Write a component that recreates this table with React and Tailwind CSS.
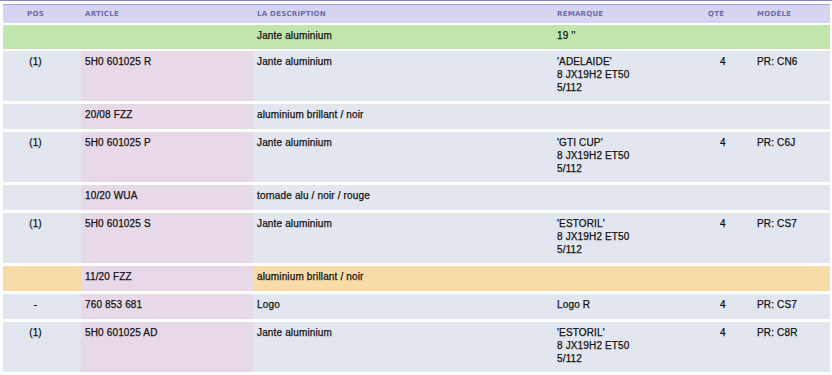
import React from "react";

const rows = [
  { kind: "green", pos: "", art: "", desc: "Jante aluminium", rem: ["19 ''"], qty: "", mod: "", tall: false },
  { kind: "gray", pos: "(1)", art: "5H0 601025 R", desc: "Jante aluminium", rem: ["'ADELAIDE'", "8 JX19H2 ET50", "5/112"], qty: "4", mod: "PR: CN6", tall: true },
  { kind: "gray", pos: "", art: "20/08 FZZ", desc: "aluminium brillant / noir", rem: [], qty: "", mod: "", tall: false },
  { kind: "gray", pos: "(1)", art: "5H0 601025 P", desc: "Jante aluminium", rem: ["'GTI CUP'", "8 JX19H2 ET50", "5/112"], qty: "4", mod: "PR: C6J", tall: true },
  { kind: "gray", pos: "", art: "10/20 WUA", desc: "tornade alu / noir / rouge", rem: [], qty: "", mod: "", tall: false },
  { kind: "gray", pos: "(1)", art: "5H0 601025 S", desc: "Jante aluminium", rem: ["'ESTORIL'", "8 JX19H2 ET50", "5/112"], qty: "4", mod: "PR: CS7", tall: true },
  { kind: "orange", pos: "", art: "11/20 FZZ", desc: "aluminium brillant / noir", rem: [], qty: "", mod: "", tall: false },
  { kind: "gray", pos: "-", art: "760 853 681", desc: "Logo", rem: ["Logo R"], qty: "4", mod: "PR: CS7", tall: false },
  { kind: "gray", pos: "(1)", art: "5H0 601025 AD", desc: "Jante aluminium", rem: ["'ESTORIL'", "8 JX19H2 ET50", "5/112"], qty: "4", mod: "PR: C8R", tall: true },
];

function Row({ r, first }) {
  const bg = r.kind === "green" ? "bg-[#c1e6ad]" : r.kind === "orange" ? "bg-[#f7dca8]" : "bg-[#e2e6ef]";
  const artBg = r.kind === "green" ? "bg-[#c1e6ad]" : "bg-[#e7d9e8]";
  const h = first ? "h-[24px]" : r.tall ? "h-[50px]" : "h-[25px]";
  return (
    <div className={`flex ${h} ${bg}`}>
      <div className="w-[78px] shrink-0 pt-[4px]">
        <div className="w-[65px] text-center">{r.pos}</div>
      </div>
      <div className={`w-[172px] shrink-0 pl-[4px] pt-[4px] ${artBg}`}>{r.art}</div>
      <div className="w-[300px] shrink-0 pl-[4px] pt-[4px]">{r.desc}</div>
      <div className="w-[147px] shrink-0 pl-[4px] pt-[4px]">
        {r.rem.map((l, i) => (
          <div key={i} className="whitespace-pre">{l}</div>
        ))}
      </div>
      <div className="w-[53px] shrink-0 pl-[20px] pt-[4px]">{r.qty}</div>
      <div className="flex-1 pl-[4px] pt-[4px]">{r.mod}</div>
    </div>
  );
}

export default function App() {
  return (
    <div className="w-[832px] h-[375px] bg-white overflow-hidden border-t border-[#8a8ab6]">
      <div className="pl-[3px] pr-[2px] pt-[3px]">
        <div className="flex h-[19px] bg-[#d5d5f1] border-t border-[#a3a3d4] items-center text-[#6c6cac] font-bold text-[7px] tracking-[0.25px] [font-family:'DejaVu_Sans',Verdana,sans-serif]">
          <div className="w-[78px] shrink-0">
            <div className="w-[65px] text-center">POS</div>
          </div>
          <div className="w-[172px] shrink-0 pl-[4px]">ARTICLE</div>
          <div className="w-[300px] shrink-0 pl-[4px]">LA DESCRIPTION</div>
          <div className="w-[147px] shrink-0 pl-[4px]">REMARQUE</div>
          <div className="w-[53px] shrink-0 pl-[8px]">QTÉ</div>
          <div className="flex-1 pl-[4px]">MODÈLE</div>
        </div>
        <div className="mt-[2px] flex flex-col gap-[3px] text-[10px] leading-[13px] tracking-[0.15px] text-[#111] [-webkit-text-stroke:0.25px_#111] [font-family:'Liberation_Sans',Arial,sans-serif]">
          {rows.map((r, i) => (
            <div key={i} className={i === 0 ? "-mb-[1px]" : ""}>
              <Row r={r} first={i === 0} />
            </div>
          ))}
        </div>
      </div>
    </div>
  );
}
